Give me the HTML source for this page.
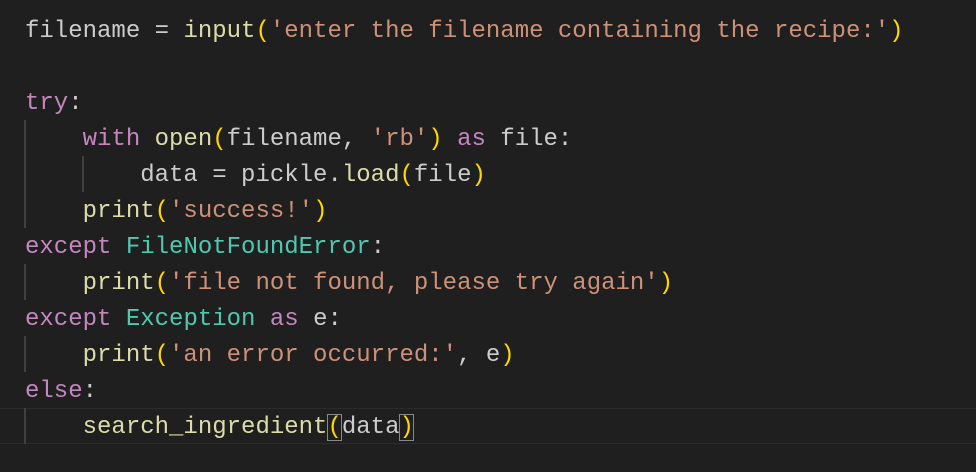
<!DOCTYPE html>
<html><head><style>
html,body{margin:0;padding:0;background:#1f1f1f;width:976px;height:472px;overflow:hidden}
.hl{position:absolute;left:0;right:0;top:408px;height:34px;border-top:1px solid #2b2b2b;border-bottom:1px solid #2b2b2b}
.g{position:absolute;width:2px;background:#404040}
pre{position:absolute;top:14px;left:25px;margin:0;font-family:"Liberation Mono",monospace;font-size:24px;line-height:36px;color:#cccccc}
.k{color:#c586c0}.f{color:#dcdcaa}.s{color:#ce9178}.c{color:#4ec9b0}.p{color:#ffd700}
.b{outline:1.5px solid #888;outline-offset:-1px}
</style></head><body>
<div class="hl"></div>
<div class="g" style="left:24px;top:120px;height:108px"></div>
<div class="g" style="left:82px;top:156px;height:36px"></div>
<div class="g" style="left:24px;top:264px;height:36px"></div>
<div class="g" style="left:24px;top:336px;height:36px"></div>
<div class="g" style="left:24px;top:408px;height:36px"></div>
<pre>filename = <span class="f">input</span><span class="p">(</span><span class="s">'enter the filename containing the recipe:'</span><span class="p">)</span>

<span class="k">try</span>:
    <span class="k">with</span> <span class="f">open</span><span class="p">(</span>filename, <span class="s">'rb'</span><span class="p">)</span> <span class="k">as</span> file:
        data = pickle.<span class="f">load</span><span class="p">(</span>file<span class="p">)</span>
    <span class="f">print</span><span class="p">(</span><span class="s">'success!'</span><span class="p">)</span>
<span class="k">except</span> <span class="c">FileNotFoundError</span>:
    <span class="f">print</span><span class="p">(</span><span class="s">'file not found, please try again'</span><span class="p">)</span>
<span class="k">except</span> <span class="c">Exception</span> <span class="k">as</span> e:
    <span class="f">print</span><span class="p">(</span><span class="s">'an error occurred:'</span>, e<span class="p">)</span>
<span class="k">else</span>:
    <span class="f">search_ingredient</span><span class="p b">(</span>data<span class="p b">)</span></pre>
</body></html>
